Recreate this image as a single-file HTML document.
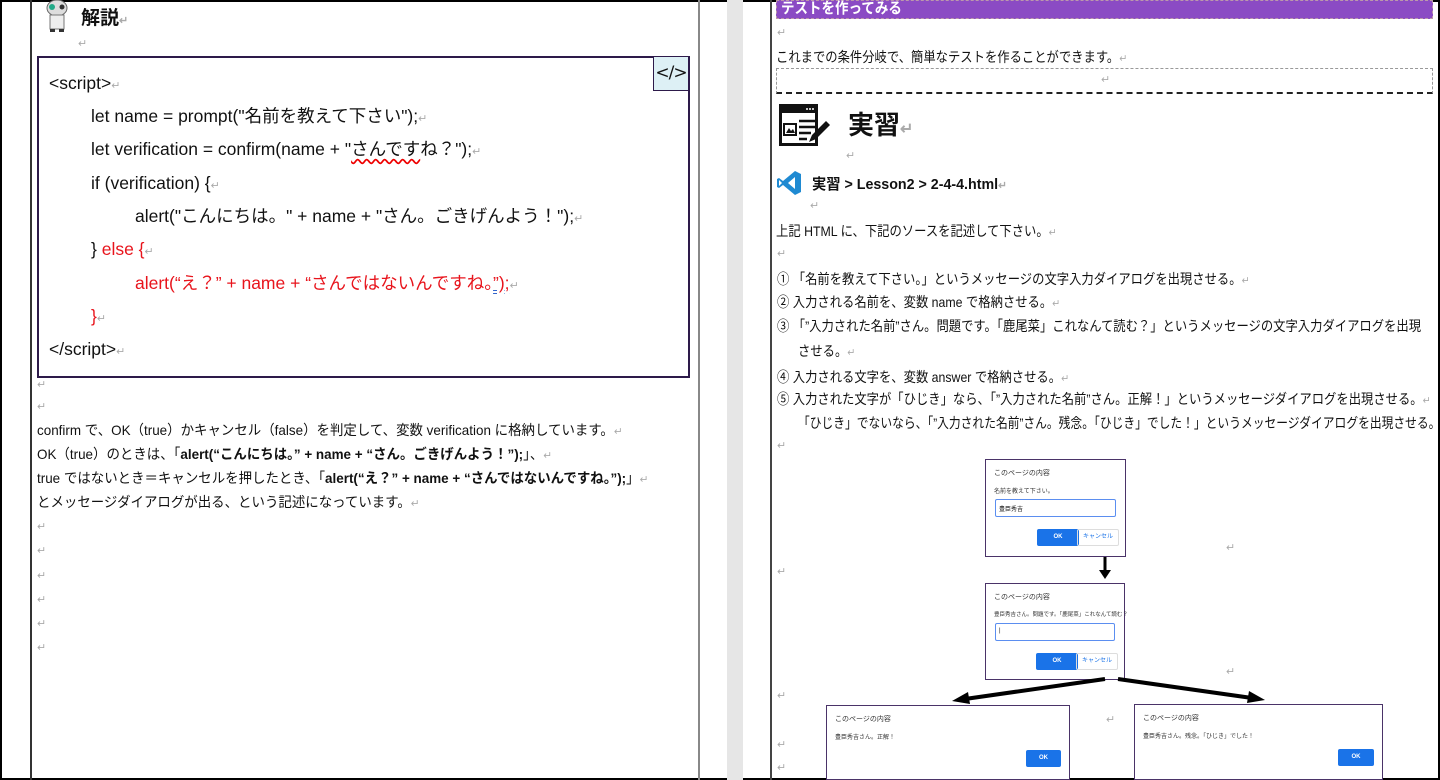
<!DOCTYPE html>
<html><head><meta charset="utf-8"><style>
*{margin:0;padding:0;box-sizing:border-box}
body{width:1440px;height:780px;overflow:hidden;background:#fff;position:relative;font-family:"Liberation Sans","Noto Sans CJK JP",sans-serif;color:#111}
.a{position:absolute;white-space:nowrap}
.r{color:#aaa;font-size:11px}
.c{font-size:17.5px;line-height:20px}
.t{font-size:14px;line-height:18px;transform-origin:0 0}
.L{transform:scaleX(0.96)}
.R{transform:scaleX(0.88)}
.red{color:#e8141c}
.dlg{position:absolute;border:1.5px solid #4a3368;background:#fff}
.dlg .h{position:absolute;left:8px;top:8px;font-size:7px;color:#333;white-space:nowrap}
.dlg .m{position:absolute;left:8px;top:26px;font-size:6px;color:#333;white-space:nowrap}
.in{position:absolute;left:9px;top:39px;right:9px;height:18px;border:1.5px solid #5b8ef0;border-radius:2px;font-size:6px;padding:4px 3px}
.ok{position:absolute;width:42px;height:17px;background:#1a73e8;color:#fff;font-size:6px;font-weight:bold;text-align:center;line-height:17px;border-radius:2px}
.cn{position:absolute;width:42px;height:17px;border:1px solid #ddd;color:#1a73e8;font-size:6px;text-align:center;line-height:15px;border-radius:2px}
</style></head><body>
<div class="a" style="left:0;top:0;width:1440px;height:780px;border:2px solid #000"></div>
<div class="a" style="left:30px;top:0;width:1.5px;height:780px;background:#333"></div>
<div class="a" style="left:698px;top:0;width:1.5px;height:780px;background:#888"></div>
<div class="a" style="left:727px;top:0;width:16px;height:780px;background:#e6e6e6"></div>
<div class="a" style="left:770px;top:0;width:1.5px;height:780px;background:#444"></div>

<svg class="a" style="left:42px;top:0" width="30" height="34" viewBox="0 0 30 34"><ellipse cx="15" cy="8" rx="10" ry="8" fill="#ddd" stroke="#666"/><circle cx="10" cy="7" r="3" fill="#2a8"/><circle cx="20" cy="7" r="2.5" fill="#333"/><rect x="8" y="15" width="14" height="14" fill="#eee" stroke="#777"/><rect x="8" y="29" width="5" height="3" fill="#333"/><rect x="17" y="29" width="5" height="3" fill="#333"/></svg>
<div class="a" style="left:81px;top:3px;font-size:19px;font-weight:bold">解説<span class="r">↵</span></div>
<div class="a r" style="left:78px;top:37px">↵</div>

<div class="a" style="left:37px;top:56px;width:653px;height:322px;border:2px solid #2d1a4a"></div>
<div class="a" style="left:653px;top:56px;width:36px;height:35px;border:1.5px solid #2d1a4a;background:#ddf0f5;font-size:17px;text-align:center;line-height:32px;font-family:'DejaVu Sans',sans-serif;overflow:hidden;letter-spacing:-1px">&lt;/&gt;</div>
<div class="a c" style="left:49px;top:73px">&lt;script&gt;<span class="r">↵</span></div>
<div class="a c" style="left:91px;top:106px">let name = prompt("名前を教えて下さい");<span class="r">↵</span></div>
<div class="a c" style="left:91px;top:139px">let verification = confirm(name + "<span style="text-decoration:underline wavy #e00;text-underline-offset:3px">さんです</span>ね？");<span class="r">↵</span></div>
<div class="a c" style="left:91px;top:173px">if (verification) {<span class="r">↵</span></div>
<div class="a c" style="left:135px;top:206px">alert("こんにちは。" + name + "さん。ごきげんよう！");<span class="r">↵</span></div>
<div class="a c" style="left:91px;top:239px">} <span class="red">else {</span><span class="r">↵</span></div>
<div class="a c red" style="left:135px;top:273px">alert(“え？” + name + “さんではないんですね。<span style="text-decoration:underline double #36c">”);</span><span class="r">↵</span></div>
<div class="a c red" style="left:91px;top:306px">}<span class="r">↵</span></div>
<div class="a c" style="left:49px;top:339px">&lt;/script&gt;<span class="r">↵</span></div>

<div class="a r" style="left:37px;top:378px">↵</div>
<div class="a r" style="left:37px;top:400px">↵</div>
<div class="a t L" style="left:37px;top:421px">confirm で、OK（true）かキャンセル（false）を判定して、変数 verification に格納しています。<span class="r">↵</span></div>
<div class="a t L" style="left:37px;top:445px">OK（true）のときは、「<b>alert(“こんにちは。” + name + “さん。ごきげんよう！”);</b>」、<span class="r">↵</span></div>
<div class="a t L" style="left:37px;top:469px">true ではないとき＝キャンセルを押したとき、「<b>alert(“え？” + name + “さんではないんですね。”);</b>」<span class="r">↵</span></div>
<div class="a t L" style="left:37px;top:493px">とメッセージダイアログが出る、という記述になっています。<span class="r">↵</span></div>
<div class="a r" style="left:37px;top:520px">↵</div>
<div class="a r" style="left:37px;top:544px">↵</div>
<div class="a r" style="left:37px;top:569px">↵</div>
<div class="a r" style="left:37px;top:593px">↵</div>
<div class="a r" style="left:37px;top:617px">↵</div>
<div class="a r" style="left:37px;top:641px">↵</div>

<div class="a" style="left:776px;top:0;width:657px;height:19px;background:#8b4bc4;border:1px dashed #b9a"></div>
<div class="a" style="left:781px;top:-3px;font-size:15px;font-weight:bold;color:#fff;transform:scaleX(0.9);transform-origin:0 0">テストを作ってみる</div>
<div class="a r" style="left:777px;top:26px">↵</div>
<div class="a t R" style="left:776px;top:48px">これまでの条件分岐で、簡単なテストを作ることができます。<span class="r">↵</span></div>
<div class="a" style="left:776px;top:68px;width:657px;height:26px;border:1px dashed #999;border-bottom:2px dashed #222"></div>
<div class="a r" style="left:1101px;top:73px">↵</div>
<svg class="a" style="left:779px;top:104px" width="56" height="42" viewBox="0 0 56 42"><rect x="1.5" y="1.5" width="36" height="39" fill="#fff" stroke="#111" stroke-width="3"/><rect x="1" y="1" width="37" height="8" fill="#111"/><circle cx="28" cy="5" r="1" fill="#fff"/><circle cx="31" cy="5" r="1" fill="#fff"/><circle cx="34" cy="5" r="1" fill="#fff"/><rect x="5" y="20" width="12" height="11" fill="none" stroke="#111" stroke-width="2"/><path d="M7 29l3-5 2 3 2-2 2 4z" fill="#111"/><path d="M20 17h18M20 23h16M20 29h12M20 35h8" stroke="#111" stroke-width="2.5"/><path d="M30 38l3-7 14-14 4 4-14 14z" fill="#111"/></svg>
<div class="a" style="left:848px;top:105px;font-size:26px;font-weight:bold">実習<span class="r" style="font-size:16px">↵</span></div>
<div class="a r" style="left:846px;top:149px">↵</div>
<svg class="a" style="left:777px;top:170px" width="25" height="26" viewBox="0 0 25 26"><path d="M18 1l6 3v18l-6 3L6 15l-4 3-2-1V9l2-1 4 3z" fill="#1f8ad2"/><path d="M18 7v12l-7-6z" fill="#fff"/><path d="M2 10v6l3-3z" fill="#fff"/></svg>
<div class="a" style="left:812px;top:173px;font-size:15px;font-weight:bold;transform:scaleX(0.95);transform-origin:0 0">実習 &gt; Lesson2 &gt; 2-4-4.html<span class="r">↵</span></div>
<div class="a r" style="left:810px;top:199px">↵</div>
<div class="a t R" style="left:776px;top:222px">上記 HTML に、下記のソースを記述して下さい。<span class="r">↵</span></div>
<div class="a r" style="left:777px;top:247px">↵</div>
<div class="a t R" style="left:777px;top:270px">① 「名前を教えて下さい。」というメッセージの文字入力ダイアログを出現させる。<span class="r">↵</span></div>
<div class="a t R" style="left:777px;top:293px">② 入力される名前を、変数 name で格納させる。<span class="r">↵</span></div>
<div class="a t R" style="left:777px;top:317px">③ 「”入力された名前”さん。問題です。「鹿尾菜」これなんて読む？」というメッセージの文字入力ダイアログを出現</div>
<div class="a t R" style="left:798px;top:342px">させる。<span class="r">↵</span></div>
<div class="a t R" style="left:777px;top:368px">④ 入力される文字を、変数 answer で格納させる。<span class="r">↵</span></div>
<div class="a t R" style="left:777px;top:390px">⑤ 入力された文字が「ひじき」なら、「”入力された名前”さん。正解！」というメッセージダイアログを出現させる。<span class="r">↵</span></div>
<div class="a t" style="left:798px;top:414px;transform:scaleX(0.84)">「ひじき」でないなら、「”入力された名前”さん。残念。「ひじき」でした！」というメッセージダイアログを出現させる。<span class="r">↵</span></div>
<div class="a r" style="left:777px;top:439px">↵</div>

<div class="dlg" style="left:985px;top:459px;width:141px;height:98px"><div class="h">このページの内容</div><div class="m">名前を教えて下さい。</div><div class="in">豊臣秀吉</div><div class="ok" style="right:46px;top:69px">OK</div><div class="cn" style="right:6px;top:69px">キャンセル</div></div>
<div class="a r" style="left:1226px;top:541px">↵</div>
<div class="a r" style="left:777px;top:565px">↵</div>
<svg class="a" style="left:1097px;top:557px" width="16" height="24"><path d="M8 0v15" stroke="#000" stroke-width="3"/><path d="M2 13h12l-6 9z" fill="#000"/></svg>
<div class="dlg" style="left:985px;top:583px;width:140px;height:97px"><div class="h">このページの内容</div><div class="m" style="font-size:5.5px">豊臣秀吉さん。問題です。「鹿尾菜」これなんて読む？</div><div class="in">|</div><div class="ok" style="right:46px;top:69px">OK</div><div class="cn" style="right:6px;top:69px">キャンセル</div></div>
<div class="a r" style="left:1226px;top:665px">↵</div>
<div class="a r" style="left:777px;top:689px">↵</div>
<svg class="a" style="left:940px;top:675px" width="340" height="35"><path d="M165 4L25 24" stroke="#000" stroke-width="4"/><path d="M12 26l16-9 2 12z" fill="#000"/><path d="M178 4L312 23" stroke="#000" stroke-width="4"/><path d="M325 25l-16-9-2 12z" fill="#000"/></svg>
<div class="a r" style="left:1106px;top:713px">↵</div>
<div class="a r" style="left:777px;top:738px">↵</div>
<div class="a r" style="left:777px;top:761px">↵</div>
<div class="dlg" style="left:826px;top:705px;width:244px;height:75px"><div class="h">このページの内容</div><div class="m">豊臣秀吉さん。正解！</div><div class="ok" style="width:35px;right:8px;top:44px">OK</div></div>
<div class="dlg" style="left:1134px;top:704px;width:249px;height:76px"><div class="h">このページの内容</div><div class="m">豊臣秀吉さん。残念。「ひじき」でした！</div><div class="ok" style="width:36px;right:8px;top:44px">OK</div></div>
</body></html>
